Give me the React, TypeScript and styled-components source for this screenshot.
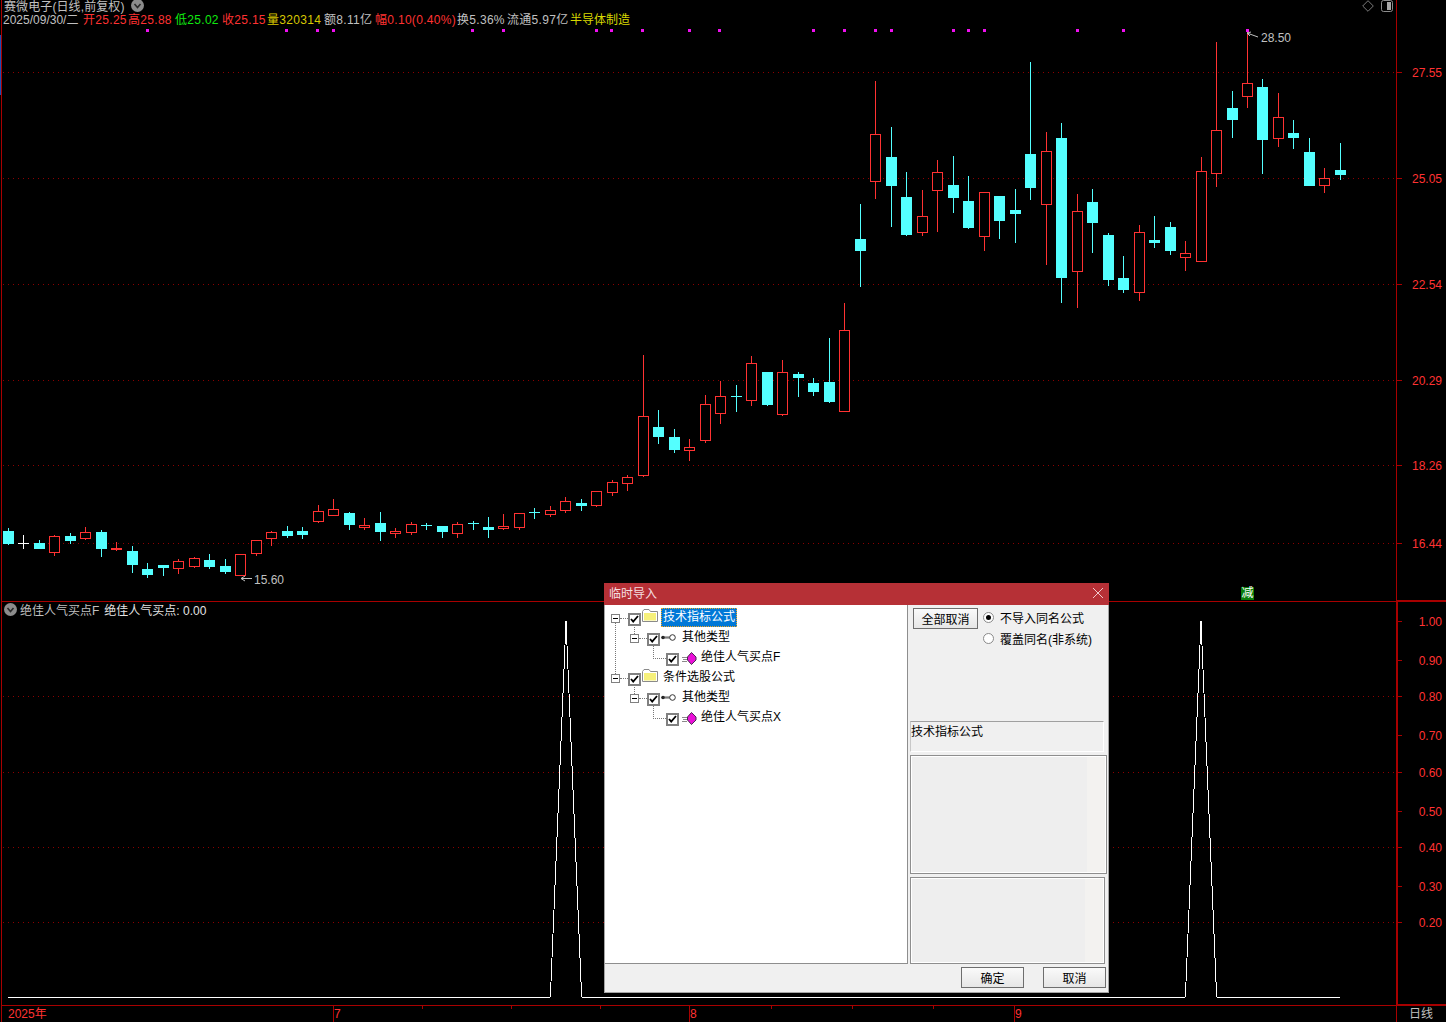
import React from 'react';
import styled, { createGlobalStyle } from 'styled-components';

const GlobalStyle = createGlobalStyle`
  html, body {
    margin: 0;
    padding: 0;
    background: #000;
    overflow: hidden;
  }
`;

const FONT = `"Liberation Sans", "Noto Sans CJK SC", sans-serif`;
const LINE = '#a80000';
const RED = '#ff3232';
const CYAN = '#54ffff';
const GREY = '#c0c0c0';

// [high, body top, body bottom, low, colour] r = red hollow, c = cyan filled, w = white
type Candle = [number, number, number, number, string];

const CANDLES: Candle[] = [
  [528, 531, 543, 544, 'c'], [535, 543, 543, 548, 'w'], [540, 543, 548, 548, 'c'], [535, 536, 552, 555, 'r'],
  [533, 536, 540, 543, 'c'], [527, 532, 538, 539, 'r'], [530, 532, 548, 556, 'c'], [542, 548, 549, 550, 'r'],
  [546, 551, 564, 572, 'c'], [563, 569, 574, 577, 'c'], [565, 565, 567, 575, 'c'], [559, 561, 568, 573, 'r'],
  [557, 558, 566, 567, 'r'], [554, 560, 566, 568, 'c'], [559, 566, 571, 573, 'c'], [554, 554, 575, 575, 'r'],
  [540, 540, 553, 555, 'r'], [531, 532, 538, 545, 'r'], [526, 531, 535, 537, 'c'], [527, 531, 534, 538, 'c'],
  [505, 511, 521, 522, 'r'], [499, 509, 515, 515, 'r'], [512, 513, 524, 529, 'c'], [518, 525, 527, 529, 'r'],
  [512, 523, 531, 540, 'c'], [528, 531, 533, 537, 'r'], [522, 524, 532, 534, 'r'], [523, 525, 525, 529, 'c'],
  [526, 526, 531, 537, 'c'], [522, 524, 533, 537, 'r'], [521, 523, 523, 529, 'c'], [517, 527, 529, 537, 'c'],
  [514, 526, 528, 529, 'r'], [513, 513, 527, 529, 'r'], [508, 512, 512, 518, 'c'], [506, 510, 514, 516, 'r'],
  [497, 501, 510, 512, 'r'], [499, 503, 505, 510, 'c'], [491, 491, 505, 506, 'r'], [480, 482, 492, 495, 'r'],
  [475, 477, 483, 490, 'r'], [355, 416, 475, 476, 'r'], [410, 427, 436, 443, 'c'], [429, 437, 449, 452, 'c'],
  [439, 447, 450, 460, 'r'], [395, 404, 440, 442, 'r'], [381, 396, 413, 423, 'r'], [385, 396, 396, 411, 'c'],
  [356, 363, 400, 405, 'r'], [372, 372, 404, 405, 'c'], [360, 372, 414, 415, 'r'], [372, 374, 377, 396, 'c'],
  [378, 383, 391, 395, 'c'], [338, 382, 401, 402, 'c'], [303, 330, 411, 411, 'r'], [204, 239, 250, 286, 'c'],
  [81, 134, 181, 198, 'r'], [127, 157, 185, 226, 'c'], [172, 197, 234, 235, 'c'], [190, 216, 232, 235, 'r'],
  [160, 172, 190, 231, 'r'], [156, 185, 197, 212, 'c'], [176, 201, 227, 228, 'c'], [192, 192, 236, 250, 'r'],
  [196, 196, 220, 238, 'c'], [189, 210, 213, 242, 'c'], [62, 154, 187, 199, 'c'], [132, 151, 204, 264, 'r'],
  [123, 138, 277, 302, 'c'], [194, 211, 271, 307, 'r'], [189, 202, 222, 252, 'c'], [233, 235, 279, 285, 'c'],
  [256, 278, 289, 292, 'c'], [225, 232, 292, 300, 'r'], [216, 240, 242, 247, 'c'], [222, 227, 250, 254, 'c'],
  [241, 253, 257, 270, 'r'], [157, 171, 261, 261, 'r'], [42, 130, 173, 186, 'r'], [91, 108, 119, 137, 'c'],
  [30, 83, 96, 107, 'r'], [79, 87, 139, 173, 'c'], [93, 117, 138, 146, 'r'], [120, 133, 137, 148, 'c'],
  [138, 152, 185, 185, 'c'], [168, 178, 185, 192, 'r'], [143, 170, 174, 179, 'c'],
];

const MARKS = [147, 286, 317, 333, 472, 503, 596, 611, 642, 689, 719, 813, 844, 875, 891, 953, 968, 984, 1077, 1123, 1247];
const PRICE_LINES: [number, string][] = [[72, '27.55'], [178, '25.05'], [284, '22.54'], [380, '20.29'], [465, '18.26'], [543, '16.44']];
const RATE_TICKS: [number, string][] = [[621, '1.00'], [660, '0.90'], [696, '0.80'], [735, '0.70'], [772, '0.60'], [811, '0.50'], [847, '0.40'], [886, '0.30'], [922, '0.20']];
const RATE_LINES = [696, 772, 847, 922];
const MINOR_TICKS = [422, 511, 600, 771, 852, 933];
const MONTHS: [number, string][] = [[333, '7'], [689, '8'], [1014, '9']];

const PEAKS = '8,997 550,997 551,982 566,621 581,982 582,997 1185,997 1186,982 1201,621 1216,982 1217,997 1340,997';

const Screen = styled.div`
  position: relative;
  width: 1446px;
  height: 1022px;
  box-sizing: border-box;
  padding-left: 1px;
  background: #000;
  overflow: hidden;
  display: flex;
  flex-direction: column;
  font: 12px ${FONT};
`;

const Row = styled.div`
  display: flex;
`;

const Pane = styled.div<{ $h: number }>`
  position: relative;
  width: 1395px;
  height: ${p => p.$h}px;
  box-sizing: border-box;
  border-left: 1px solid ${LINE};
  border-bottom: 1px solid ${LINE};
`;

const Axis = styled.div<{ $h: number; $w: number }>`
  width: 50px;
  height: ${p => p.$h}px;
  box-sizing: border-box;
  border-left: ${p => p.$w}px solid ${LINE};
  border-bottom: 2px solid ${LINE};
`;

const Plot = styled.svg`
  display: block;
  shape-rendering: crispEdges;
  text {
    font: 12px ${FONT};
    shape-rendering: auto;
  }
`;

const ActiveMark = styled.div`
  position: absolute;
  left: 0;
  top: 35px;
  width: 2px;
  height: 60px;
  background: #1c4fb4;
`;

const HeadBlock = styled.div`
  position: absolute;
  left: 2px;
  top: -2px;
`;

const TitleLine = styled.div`
  display: flex;
  align-items: center;
  height: 14px;
  color: ${GREY};
  gap: 6px;
  letter-spacing: 0.1px;
`;

const Round = styled.span`
  width: 13px;
  height: 13px;
  display: block;
  flex: none;
`;

const QuoteLine = styled.div`
  display: flex;
  height: 14px;
  line-height: 14px;
  margin: 1px 0 0 -1px;
  white-space: nowrap;
  letter-spacing: 0.3px;
`;

const Quote = styled.span<{ $w: number }>`
  display: block;
  width: ${p => p.$w}px;
  flex: none;
`;

const Tint = styled.span<{ $c: string; $flat?: boolean }>`
  color: ${p => p.$c};
  letter-spacing: ${p => (p.$flat ? '0' : 'inherit')};
`;

const CornerIcons = styled.div`
  position: absolute;
  right: 3px;
  top: 0;
  display: flex;
  gap: 7px;
`;

const SubHead = styled.div`
  position: absolute;
  left: 2px;
  top: 0;
  display: flex;
  align-items: center;
  height: 14px;
  gap: 3px;
  color: ${GREY};
  white-space: nowrap;
`;

const SubValue = styled.span`
  color: #e4e4e4;
  margin-left: 2px;
`;

const CutBadge = styled.div`
  position: absolute;
  left: 1239px;
  top: 587px;
  width: 13px;
  height: 13px;
  background: #0a7c0a;
  color: #fff;
  font-size: 12px;
  line-height: 13px;
  text-align: center;
`;

const TimeBar = styled.div`
  position: relative;
  width: 1395px;
  height: 16px;
  box-sizing: border-box;
  border-left: 1px solid ${LINE};
`;

const CycleCell = styled.div`
  width: 50px;
  height: 16px;
  box-sizing: border-box;
  border-left: 1px solid ${LINE};
  padding-left: 12px;
  color: ${GREY};
  line-height: 16px;
`;

/* dialog */

const Dialog = styled.div`
  position: absolute;
  left: 604px;
  top: 583px;
  width: 505px;
  height: 410px;
  display: flex;
  flex-direction: column;
  color: #000;
`;

const DialogTitle = styled.div`
  height: 22px;
  flex: none;
  box-sizing: border-box;
  background: #b63036;
  color: #f4dfe0;
  display: flex;
  align-items: center;
  justify-content: space-between;
  padding: 0 5px 3px 5px;
`;

const DialogBody = styled.div`
  flex: 1;
  display: flex;
  flex-direction: column;
  background: #f0f0f0;
  border: 1px solid #a4a4a4;
  border-top: none;
  min-height: 0;
`;

const Split = styled.div`
  display: flex;
  height: 359px;
  flex: none;
`;

const TreePanel = styled.div`
  width: 303px;
  flex: none;
  box-sizing: border-box;
  background: #fff;
  border-right: 1px solid #8e8e8e;
  border-bottom: 1px solid #8e8e8e;
  padding-top: 4px;
`;

const TreeRow = styled.div<{ $x: number }>`
  display: flex;
  align-items: center;
  height: 20px;
  padding-left: ${p => p.$x}px;
  white-space: nowrap;
`;

const Toggle = styled.span<{ $down?: number; $up?: number }>`
  position: relative;
  width: 9px;
  height: 9px;
  flex: none;
  box-sizing: border-box;
  border: 1px solid #808080;
  background: #fff;
  margin-bottom: 2px;
  &::before {
    content: '';
    position: absolute;
    left: 1px;
    top: 3px;
    width: 5px;
    height: 1px;
    background: #000;
  }
  &::after {
    content: '';
    position: absolute;
    left: 3px;
    ${p => (p.$down ? `top: 8px; height: ${p.$down}px;` : `bottom: 8px; height: ${p.$up || 0}px;`)}
    border-left: 1px dotted #777;
  }
`;

const Dash = styled.span<{ $w: number }>`
  width: ${p => p.$w}px;
  flex: none;
  border-top: 1px dotted #777;
  margin-bottom: 2px;
`;

const Elbow = styled.span`
  align-self: flex-start;
  width: 13px;
  height: 13px;
  margin-top: -3px;
  flex: none;
  box-sizing: border-box;
  border-left: 1px dotted #777;
  border-bottom: 1px dotted #777;
`;

const Check = styled.span`
  width: 13px;
  height: 13px;
  flex: none;
  box-sizing: border-box;
  border: 2px solid #808080;
  background: #fff;
  display: flex;
  align-items: center;
  justify-content: center;
`;

const RowIcon = styled.svg<{ $lift: number; $gap: number }>`
  display: block;
  flex: none;
  margin-bottom: ${p => p.$lift}px;
  margin-left: 1px;
  margin-right: ${p => p.$gap}px;
`;

const NodeText = styled.span<{ $on?: boolean }>`
  box-sizing: border-box;
  height: 19px;
  line-height: 17px;
  padding: 0 1px;
  margin-bottom: 3px;
  background: ${p => (p.$on ? '#0078d7' : 'transparent')};
  color: ${p => (p.$on ? '#fff' : '#000')};
  border: 1px dotted ${p => (p.$on ? '#f5a623' : 'transparent')};
`;

const SidePanel = styled.div`
  flex: 1;
  display: flex;
  flex-direction: column;
  min-width: 0;
`;

const Controls = styled.div`
  height: 116px;
  flex: none;
  display: flex;
  gap: 5px;
  padding: 3px 0 0 5px;
  box-sizing: border-box;
`;

const PlainButton = styled.button`
  box-sizing: border-box;
  padding: 0;
  font: 12px ${FONT};
  color: #000;
  border: 1px solid #6e6e6e;
  border-width: 1.5px;
  background: linear-gradient(#fafafa, #e6e6e6);
`;

const CancelAll = styled(PlainButton)`
  width: 65px;
  height: 21px;
`;

const Radios = styled.div`
  display: flex;
  flex-direction: column;
  margin-top: -1px;
`;

const RadioRow = styled.div`
  display: flex;
  align-items: center;
  height: 21px;
  gap: 6px;
  white-space: nowrap;
`;

const RadioDot = styled.span<{ $on?: boolean }>`
  width: 11px;
  height: 11px;
  flex: none;
  box-sizing: border-box;
  border-radius: 50%;
  background: #fff;
  border: 1px solid #8a8a8a;
  display: flex;
  align-items: center;
  justify-content: center;
  &::after {
    content: '';
    width: 5px;
    height: 5px;
    border-radius: 50%;
    background: ${p => (p.$on ? '#000' : 'transparent')};
  }
`;

const InfoBox = styled.div`
  box-sizing: border-box;
  width: 194px;
  height: 31px;
  margin-left: 2px;
  flex: none;
  border-top: 1px solid #a0a0a0;
  border-left: 1px solid #c8c8c8;
  border-right: 1px solid #fff;
  border-bottom: 1px solid #fff;
  line-height: 20px;
`;

const Preview = styled.div<{ $w: number; $h: number; $mt: number; $strip: number }>`
  box-sizing: border-box;
  width: ${p => p.$w}px;
  height: ${p => p.$h}px;
  margin: ${p => p.$mt}px 0 0 2px;
  flex: none;
  border: 1px solid #8e8e8e;
  box-shadow: inset 0 0 0 1px #fff;
  background: linear-gradient(to right, #eeeeee calc(100% - ${p => p.$strip}px), #f3f2f0 calc(100% - ${p => p.$strip}px));
`;

const Footer = styled.div`
  flex: 1;
  display: flex;
  justify-content: flex-end;
  gap: 19px;
  padding: 3px 2px 0 0;
`;

const FootButton = styled(PlainButton)`
  width: 63px;
  height: 21px;
`;

const Chevron: React.FC = () => (
  <Round>
    <svg width="13" height="13" viewBox="0 0 13 13">
      <circle cx="6.5" cy="6.5" r="6.5" fill="#8c8c8c" />
      <path d="M3.5 5 L6.5 8.5 L9.5 5" fill="none" stroke="#2a2a2a" strokeWidth="1.6" />
    </svg>
  </Round>
);

const CheckBox: React.FC = () => (
  <Check>
    <svg width="9" height="8" viewBox="0 0 9 8">
      <path d="M1 4 L3.2 6.6 L8 1" fill="none" stroke="#000" strokeWidth="1.8" />
    </svg>
  </Check>
);

const FolderIcon: React.FC = () => (
  <RowIcon $lift={8} $gap={3} width="16" height="13" viewBox="0 0 16 13">
    <path d="M0.5 12.5 V2.5 L2 0.5 H7 L8.5 2.5 H15.5 V12.5 Z" fill="#fff" stroke="#8a8a8a" />
    <rect x="2" y="4" width="12" height="7.5" fill="#f6f07a" />
  </RowIcon>
);

const KeyIcon: React.FC = () => (
  <RowIcon $lift={3} $gap={4} width="15" height="9" viewBox="0 0 15 9">
    <circle cx="2" cy="4.5" r="1.8" fill="#222" />
    <path d="M2 4 H9 M2 5 H9" stroke="#333" strokeWidth="0.8" />
    <circle cx="11.5" cy="4.5" r="2.8" fill="#fff" stroke="#333" />
  </RowIcon>
);

const FormulaIcon: React.FC = () => (
  <RowIcon $lift={2} $gap={2} width="17" height="13" viewBox="-2 0 17 13">
    <path d="M0 5.5 H5 M1 7.5 H5 M0 9.5 H5" stroke="#8a8a8a" fill="none" shapeRendering="crispEdges" />
    <path d="M9.5 0.5 L14 5 V8 L9.5 12.5 L5.5 8 V5 Z" fill="#ea10d8" stroke="#4a2a50" />
  </RowIcon>
);

const candleX = (i: number) => Math.floor(8.3 + 15.49 * i) + 0.5;

const Candles: React.FC = () => (
  <>
    {CANDLES.map(([high, top, bottom, low, kind], i) => {
      const x = candleX(i);
      const color = kind === 'r' ? RED : kind === 'c' ? CYAN : '#fff';
      return (
        <g key={i}>
          <line x1={x} x2={x} y1={high} y2={low + 1} stroke={color} />
          {kind === 'r' ? (
            <rect x={x - 5} y={top + 0.5} width={10} height={Math.max(bottom - top, 1)} fill="#000" stroke={color} />
          ) : (
            <rect x={x - 5.5} y={top} width={11} height={bottom - top + 1} fill={color} />
          )}
        </g>
      );
    })}
  </>
);

const PricePlot: React.FC = () => (
  <Plot width="1394" height="601" viewBox="2 0 1394 601">
    {PRICE_LINES.map(([y]) => (
      <line key={y} x1="3" x2="1396" y1={y + 0.5} y2={y + 0.5} stroke="#8c0000" strokeDasharray="1 4" />
    ))}
    <Candles />
    {MARKS.map(x => (
      <rect key={x} x={x - 1} y={29} width={3} height={3} fill="#f010f0" />
    ))}
    <path d="M1247 33 L1258 37 M1247 33 L1251 32 M1247 33 L1250 36" stroke="#c0c0c0" fill="none" shapeRendering="auto" />
    <text x="1261" y="42" fill="#c0c0c0">28.50</text>
    <path d="M241 578.5 H252 M241 578.5 L245 576 M241 578.5 L245 581" stroke="#c0c0c0" fill="none" shapeRendering="auto" />
    <text x="254" y="584" fill="#c0c0c0">15.60</text>
  </Plot>
);

const RatePlot: React.FC = () => (
  <Plot width="1394" height="403" viewBox="2 602 1394 403">
    {RATE_LINES.map(y => (
      <line key={y} x1="3" x2="1396" y1={y + 0.5} y2={y + 0.5} stroke="#8c0000" strokeDasharray="1 4" />
    ))}
    <polyline points={PEAKS} fill="none" stroke="#fff" />
  </Plot>
);

const PriceScale: React.FC = () => (
  <Plot width="49" height="599" viewBox="1397 0 49 599">
    {PRICE_LINES.map(([y, label]) => (
      <g key={y}>
        <line x1="1397" x2="1402" y1={y + 0.5} y2={y + 0.5} stroke={LINE} />
        <text x="1442" y={y + 5} textAnchor="end" fill={RED}>{label}</text>
      </g>
    ))}
  </Plot>
);

const RateScale: React.FC = () => (
  <Plot width="48" height="402" viewBox="1398 602 48 402">
    {RATE_TICKS.map(([y, label]) => (
      <g key={y}>
        <line x1="1398" x2="1402" y1={y + 0.5} y2={y + 0.5} stroke={LINE} />
        <text x="1442" y={y + 5} textAnchor="end" fill={RED}>{label}</text>
      </g>
    ))}
  </Plot>
);

const TimeTicks: React.FC = () => (
  <Plot width="1394" height="16" viewBox="2 1006 1394 16">
    {MINOR_TICKS.map(x => (
      <line key={x} x1={x + 0.5} x2={x + 0.5} y1="1006" y2="1009" stroke={LINE} />
    ))}
    {MONTHS.map(([x, label]) => (
      <g key={x}>
        <line x1={x + 0.5} x2={x + 0.5} y1="1006" y2="1022" stroke={LINE} />
        <text x={x + 1} y="1018" fill={RED}>{label}</text>
      </g>
    ))}
    <text x="8" y="1018" fill={RED}>2025年</text>
  </Plot>
);

export default function App() {
  return (
    <Screen>
      <GlobalStyle />
      <ActiveMark />
      <Row>
        <Pane $h={602}>
          <PricePlot />
          <HeadBlock>
            <TitleLine>
              赛微电子(日线,前复权)
              <Chevron />
            </TitleLine>
            <QuoteLine>
              <Quote $w={80}><Tint $c={GREY} $flat>2025/09/30/二</Tint></Quote>
              <Quote $w={45}><Tint $c={RED}>开25.25</Tint></Quote>
              <Quote $w={47}><Tint $c={RED}>高25.88</Tint></Quote>
              <Quote $w={47}><Tint $c="#10e810">低25.02</Tint></Quote>
              <Quote $w={45}><Tint $c={RED}>收25.15</Tint></Quote>
              <Quote $w={57}><Tint $c="#d8c800">量320314</Tint></Quote>
              <Quote $w={51}><Tint $c={GREY}>额8.11亿</Tint></Quote>
              <Quote $w={82}><Tint $c={RED}>幅0.10(0.40%)</Tint></Quote>
              <Quote $w={50}><Tint $c={GREY}>换5.36%</Tint></Quote>
              <Quote $w={63}><Tint $c={GREY}>流通5.97亿</Tint></Quote>
              <Quote $w={60}><Tint $c="#d8d800" $flat>半导体制造</Tint></Quote>
            </QuoteLine>
          </HeadBlock>
          <CornerIcons>
            <svg width="12" height="12" viewBox="0 0 12 12">
              <path d="M6 0.7 L11.3 6 L6 11.3 L0.7 6 Z" fill="none" stroke="#7a7a7a" />
            </svg>
            <svg width="12" height="12" viewBox="0 0 12 12">
              <rect x="0.5" y="0.5" width="11" height="11" rx="2" fill="none" stroke="#8c8c8c" />
              <rect x="6" y="2" width="4" height="8" fill="#a8a8a8" />
            </svg>
          </CornerIcons>
          <CutBadge>减</CutBadge>
        </Pane>
        <Axis $h={602} $w={1}>
          <PriceScale />
        </Axis>
      </Row>
      <Row>
        <Pane $h={404}>
          <RatePlot />
          <SubHead>
            <Chevron />
            <span>绝佳人气买点F</span>
            <SubValue>绝佳人气买点: 0.00</SubValue>
          </SubHead>
        </Pane>
        <Axis $h={404} $w={2}>
          <RateScale />
        </Axis>
      </Row>
      <Row>
        <TimeBar>
          <TimeTicks />
        </TimeBar>
        <CycleCell>日线</CycleCell>
      </Row>

      <Dialog>
        <DialogTitle>
          临时导入
          <svg width="12" height="12" viewBox="0 0 12 12">
            <path d="M1 1 L11 11 M11 1 L1 11" stroke="#f0c8ca" fill="none" />
          </svg>
        </DialogTitle>
        <DialogBody>
          <Split>
            <TreePanel>
              <TreeRow $x={6}>
                <Toggle $down={51} />
                <Dash $w={8} />
                <CheckBox />
                <FolderIcon />
                <NodeText $on>技术指标公式</NodeText>
              </TreeRow>
              <TreeRow $x={25}>
                <Toggle $up={7} />
                <Dash $w={8} />
                <CheckBox />
                <KeyIcon />
                <NodeText>其他类型</NodeText>
              </TreeRow>
              <TreeRow $x={48}>
                <Elbow />
                <CheckBox />
                <FormulaIcon />
                <NodeText>绝佳人气买点F</NodeText>
              </TreeRow>
              <TreeRow $x={6}>
                <Toggle />
                <Dash $w={8} />
                <CheckBox />
                <FolderIcon />
                <NodeText>条件选股公式</NodeText>
              </TreeRow>
              <TreeRow $x={25}>
                <Toggle $up={7} />
                <Dash $w={8} />
                <CheckBox />
                <KeyIcon />
                <NodeText>其他类型</NodeText>
              </TreeRow>
              <TreeRow $x={48}>
                <Elbow />
                <CheckBox />
                <FormulaIcon />
                <NodeText>绝佳人气买点X</NodeText>
              </TreeRow>
            </TreePanel>
            <SidePanel>
              <Controls>
                <CancelAll>全部取消</CancelAll>
                <Radios>
                  <RadioRow>
                    <RadioDot $on />
                    不导入同名公式
                  </RadioRow>
                  <RadioRow>
                    <RadioDot />
                    覆盖同名(非系统)
                  </RadioRow>
                </Radios>
              </Controls>
              <InfoBox>技术指标公式</InfoBox>
              <Preview $w={197} $h={119} $mt={3} $strip={19} />
              <Preview $w={195} $h={87} $mt={3} $strip={19} />
            </SidePanel>
          </Split>
          <Footer>
            <FootButton>确定</FootButton>
            <FootButton>取消</FootButton>
          </Footer>
        </DialogBody>
      </Dialog>
    </Screen>
  );
}
